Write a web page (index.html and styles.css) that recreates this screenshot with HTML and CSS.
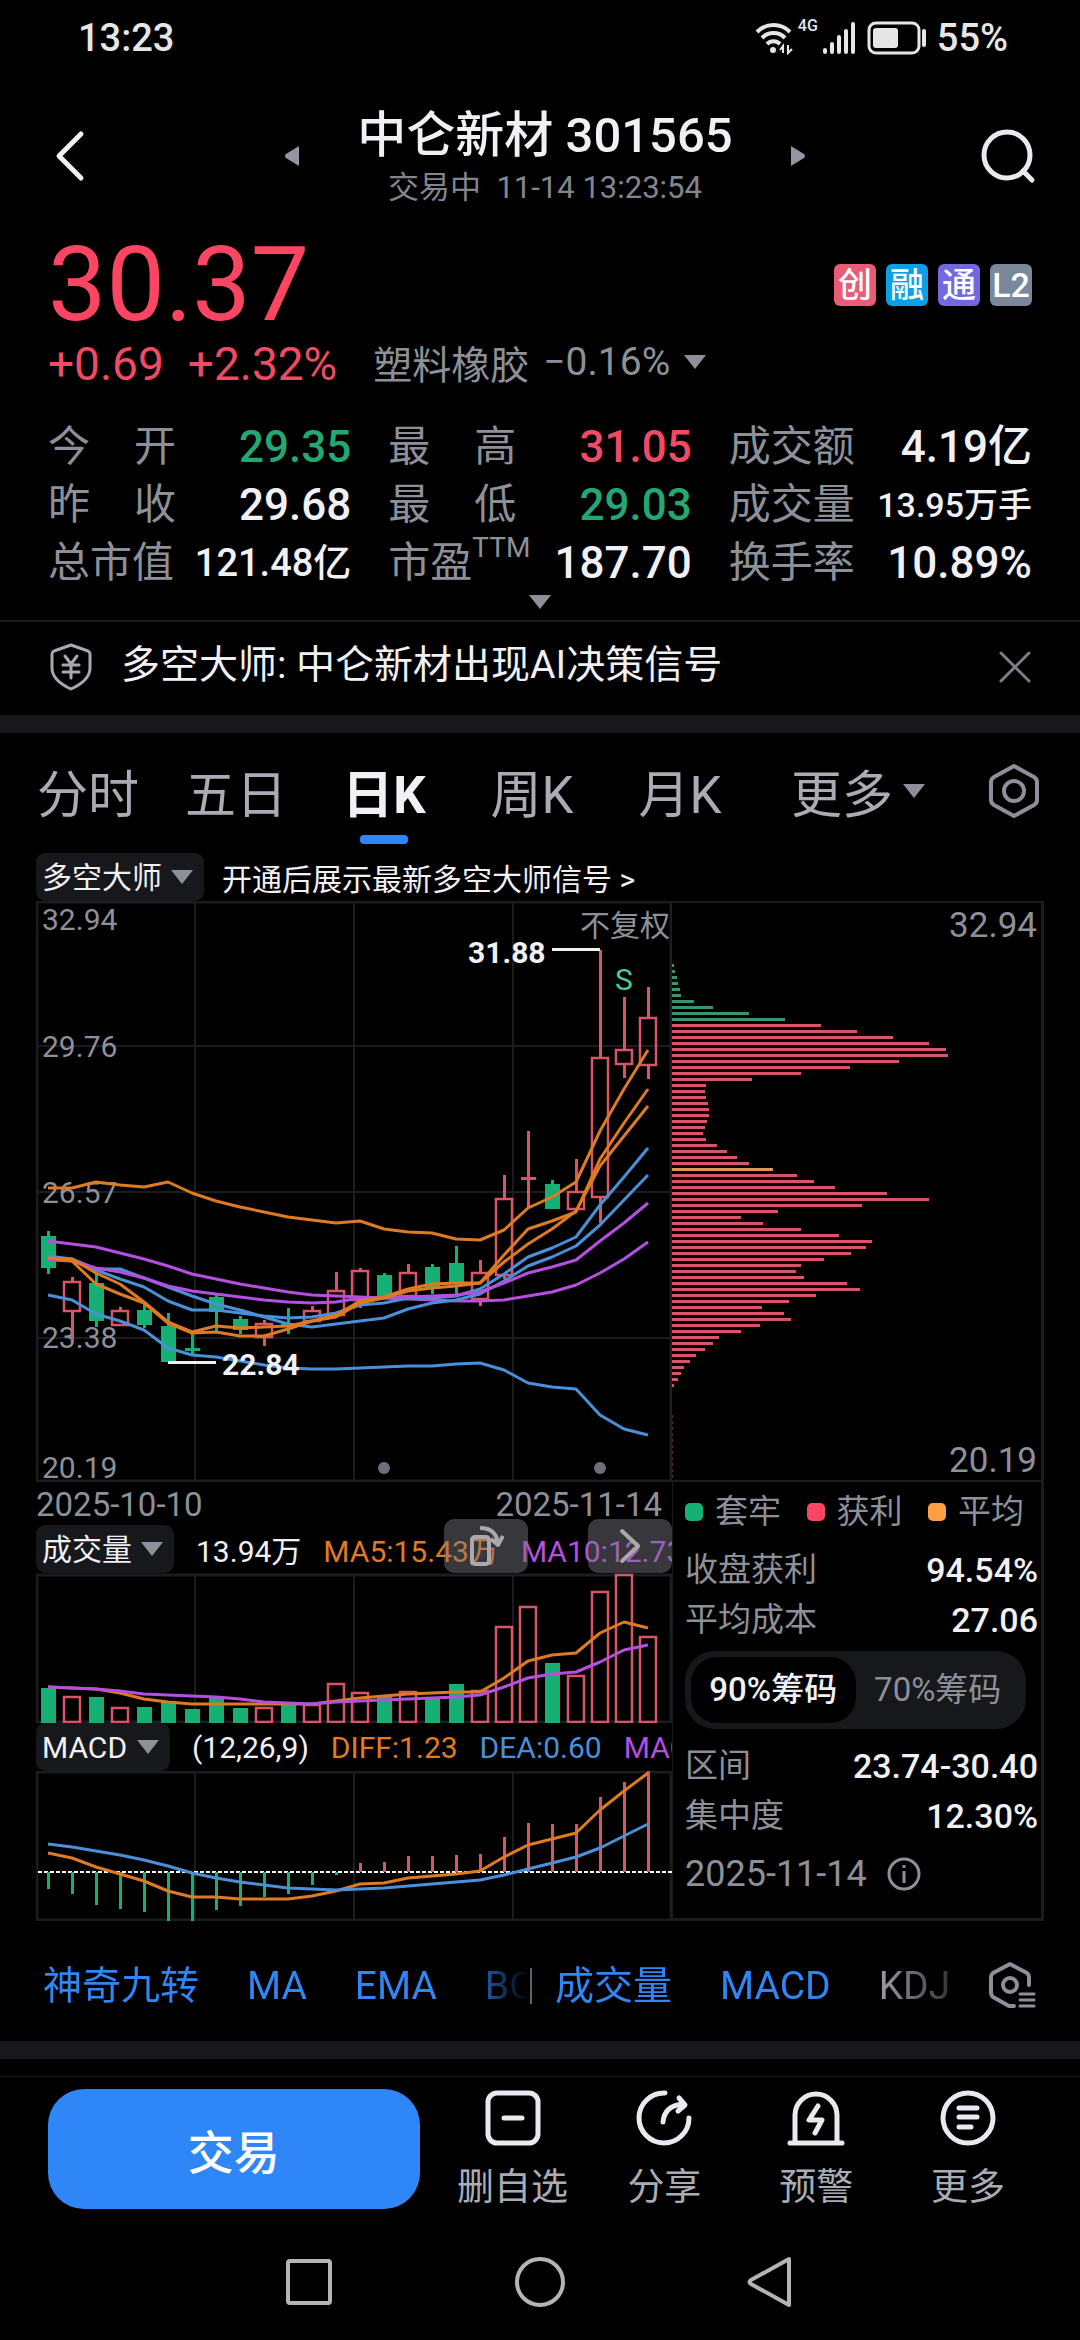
FILE: index.html
```html
<!DOCTYPE html>
<html lang="zh-CN">
<head>
    <meta charset="UTF-8">
    <meta name="viewport" content="width=device-width, initial-scale=1.0">
    <title>中仑新材 301565</title>
    <link rel="stylesheet" href="styles.css">
</head>
<body>

<div class="status-bar">
    <span class="clock">13:23</span>
    <div class="status-icons">
        <svg width="38" height="34" viewBox="0 0 38 34" fill="none" stroke="#e6e6e6" stroke-width="4">
            <path d="M2 11a23 23 0 0 1 33 0M7 17a16 16 0 0 1 23 0M12 23a9 9 0 0 1 13 0"/>
            <circle cx="18" cy="29" r="3" fill="#e6e6e6" stroke="none"/>
            <path d="M28 32v-7l-3 4M33 24v8l4-4" stroke-width="2"/>
        </svg>
        <span class="net">4G</span>
        <svg width="34" height="32" viewBox="0 0 34 32" stroke="#e6e6e6" stroke-width="4" stroke-linecap="round">
            <path d="M2 28v2M9 22v8M16 15v15M23 9v21M30 2v28"/>
        </svg>
        <svg class="battery" width="60" height="34" viewBox="0 0 60 34">
            <rect x="2" y="2" width="50" height="30" rx="7" fill="none" stroke="#e6e6e6" stroke-width="3"/>
            <rect x="6" y="7" width="25" height="20" rx="3" fill="#e6e6e6"/>
            <path d="M57 10v14" stroke="#e6e6e6" stroke-width="4" stroke-linecap="round"/>
        </svg>
        <span>55%</span>
    </div>
</div>

<header class="header">
    <button class="icon-btn" aria-label="返回">
        <svg width="32" height="52" viewBox="0 0 32 52" fill="none" stroke="#f0f0f5" stroke-width="5" stroke-linecap="round" stroke-linejoin="round"><path d="M27 4L5 26l22 22"/></svg>
    </button>
    <button class="icon-btn" aria-label="上一只">
        <svg width="14" height="22" viewBox="0 0 14 22" fill="#9497a1"><path d="M14 1v20L1 13q-2-2 0-4z"/></svg>
    </button>
    <div class="title">
        <h1>中仑新材 301565</h1>
        <p>交易中&nbsp; 11-14 13:23:54</p>
    </div>
    <button class="icon-btn" aria-label="下一只">
        <svg width="14" height="22" viewBox="0 0 14 22" fill="#9497a1"><path d="M0 1v20l13-8q2-2 0-4z"/></svg>
    </button>
    <button class="icon-btn search" aria-label="搜索">
        <svg width="56" height="56" viewBox="0 0 56 56" fill="none" stroke="#e9e9f0" stroke-width="5" stroke-linecap="round"><circle cx="27" cy="27" r="23"/><path d="M43 43l9 9"/></svg>
    </button>
</header>

<section class="quote">
    <div class="price-row">
        <span class="price">30.37</span>
        <div class="tags">
            <span class="tag tag-red">创</span>
            <span class="tag tag-blue">融</span>
            <span class="tag tag-purple">通</span>
            <span class="tag tag-gray">L2</span>
        </div>
    </div>
    <div class="change-row">
        <span class="up">+0.69</span>
        <span class="up">+2.32%</span>
        <button class="sector">塑料橡胶 <span>−0.16%</span><i class="arrow"></i></button>
    </div>
    <dl class="stats">
        <div><dt><span>今</span><span>开</span></dt><dd class="green">29.35</dd></div>
        <div><dt><span>最</span><span>高</span></dt><dd class="red">31.05</dd></div>
        <div><dt>成交额</dt><dd>4.19亿</dd></div>
        <div><dt><span>昨</span><span>收</span></dt><dd>29.68</dd></div>
        <div><dt><span>最</span><span>低</span></dt><dd class="green">29.03</dd></div>
        <div><dt>成交量</dt><dd class="small">13.95万手</dd></div>
        <div><dt>总市值</dt><dd class="medium">121.48亿</dd></div>
        <div><dt>市盈<sup>TTM</sup></dt><dd>187.70</dd></div>
        <div><dt>换手率</dt><dd>10.89%</dd></div>
    </dl>
    <button class="expand" aria-label="展开"><i class="arrow"></i></button>
</section>

<div class="alert">
    <svg width="44" height="48" viewBox="0 0 44 48" fill="none" stroke="#a6a9b1" stroke-width="3" stroke-linejoin="round" stroke-linecap="round">
        <path d="M22 2l17 6q2 1 2 3v14c0 9-8 16-19 21C11 41 3 34 3 25V11q0-2 2-3z"/>
        <path d="M16 13l6 8 6-8M22 21v14M14 22h16M14 29h16"/>
    </svg>
    <a href="#">多空大师: 中仑新材出现AI决策信号</a>
    <button class="icon-btn" aria-label="关闭">
        <svg width="32" height="32" viewBox="0 0 32 32" stroke="#7b7e88" stroke-width="3" stroke-linecap="round"><path d="M2 2l28 28M30 2L2 30"/></svg>
    </button>
</div>

<div class="band"></div>

<nav class="periods">
    <button>分时</button>
    <button>五日</button>
    <button class="active">日K</button>
    <button>周K</button>
    <button>月K</button>
    <button>更多<i class="arrow"></i></button>
    <button aria-label="设置">
        <svg width="54" height="56" viewBox="0 0 54 56" fill="none" stroke="#8d9098" stroke-width="4" stroke-linejoin="round"><path d="M27 3l20 11q3 2 3 5v18q0 3-3 5L27 53 7 42q-3-2-3-5V19q0-3 3-5z"/><circle cx="27" cy="28" r="10"/></svg>
    </button>
</nav>

<main class="charts">
    <div class="toolbar master">
        <label class="pick"><select aria-label="主图指标"><option>多空大师</option></select></label>
        <a href="#">开通后展示最新多空大师信号 &gt;</a>
    </div>

    <div class="left">
        <svg id="kline" class="chart" viewBox="36 901 636 581" role="img" aria-label="日K线"></svg>
        <div class="dates"><span>2025-10-10</span><span>2025-11-14</span></div>

        <div class="toolbar">
            <label class="pick"><select aria-label="副图指标一"><option>成交量</option></select></label>
            <span>13.94万</span>
            <span class="orange">MA5:15.43万</span>
            <span class="purple">MA10:12.73万</span>
            <div class="floating">
                <button aria-label="横屏">
                    <svg width="36" height="42" viewBox="0 0 36 42" fill="none" stroke="#a9a9ad" stroke-width="4" stroke-linejoin="round"><rect x="4" y="12" width="17" height="27" rx="3"/><path d="M12 3c11 0 17 6 18 16M23 14l7 6 5-9"/></svg>
                </button>
                <button aria-label="下一页">
                    <svg width="22" height="36" viewBox="0 0 22 36" fill="none" stroke="#a9a9ad" stroke-width="4" stroke-linecap="round" stroke-linejoin="round"><path d="M3 3l16 15L3 33"/></svg>
                </button>
            </div>
        </div>
        <svg id="volume" class="chart" viewBox="36 1573 636 150" role="img" aria-label="成交量"></svg>

        <div class="toolbar">
            <label class="pick"><select aria-label="副图指标二"><option>MACD</option></select></label>
            <span>(12,26,9)</span>
            <span class="orange">DIFF:1.23</span>
            <span class="blue">DEA:0.60</span>
            <span class="purple">MACD:1.26</span>
        </div>
        <svg id="macd" class="chart" viewBox="36 1771 636 150" role="img" aria-label="MACD"></svg>
    </div>

    <aside class="right">
        <svg id="chips" class="chart" viewBox="672 901 372 581" role="img" aria-label="筹码分布"></svg>
        <div class="chip-info">
            <div class="legend">
                <span class="key key-green">套牢</span>
                <span class="key key-red">获利</span>
                <span class="key key-orange">平均</span>
            </div>
            <div class="line"><span>收盘获利</span><b>94.54%</b></div>
            <div class="line"><span>平均成本</span><b>27.06</b></div>
            <div class="toggle">
                <label><input type="radio" name="chip" checked><span>90%筹码</span></label>
                <label><input type="radio" name="chip"><span>70%筹码</span></label>
            </div>
            <div class="line"><span>区间</span><b>23.74-30.40</b></div>
            <div class="line"><span>集中度</span><b>12.30%</b></div>
            <div class="chip-date">
                2025-11-14
                <button class="icon-btn" aria-label="说明">
                    <svg width="34" height="34" viewBox="0 0 34 34" fill="none" stroke="#8d9098" stroke-width="3"><circle cx="17" cy="17" r="15"/><path d="M17 14v12M17 8v3"/></svg>
                </button>
            </div>
        </div>
    </aside>
</main>

<nav class="indicators">
    <div class="group group-main">
        <button>神奇九转</button>
        <button>MA</button>
        <button>EMA</button>
        <button>BOLL</button>
    </div>
    <div class="group group-sub">
        <button>成交量</button>
        <button>MACD</button>
        <button class="off">KDJ</button>
    </div>
    <button class="icon-btn" aria-label="指标设置">
        <svg width="50" height="50" viewBox="0 0 50 50" fill="none" stroke="#8d9098" stroke-width="4" stroke-linecap="round" stroke-linejoin="round"><path d="M42 24V16q0-2-2-4L23 3 6 12q-2 2-2 4v16q0 2 2 4l16 9h5"/><circle cx="23" cy="24" r="7"/><path d="M33 33h14M33 39h14M33 45h14" stroke-width="3"/></svg>
    </button>
</nav>

<div class="band"></div>

<footer class="actions">
    <button class="trade">交易</button>
    <button class="action">
        <svg width="58" height="58" viewBox="0 0 58 58" fill="none" stroke="#e9e9f0" stroke-width="5" stroke-linecap="round"><rect x="4" y="4" width="50" height="50" rx="9"/><path d="M20 29h18"/></svg>
        删自选
    </button>
    <button class="action">
        <svg width="58" height="58" viewBox="0 0 58 58" fill="none" stroke="#e9e9f0" stroke-width="5" stroke-linecap="round" stroke-linejoin="round"><path d="M30 4a25 25 0 1 0 24 25M28 33c1-11 8-17 20-18M44 9l6 7-7 6"/></svg>
        分享
    </button>
    <button class="action">
        <svg width="58" height="58" viewBox="0 0 58 58" fill="none" stroke="#e9e9f0" stroke-width="5" stroke-linecap="round" stroke-linejoin="round"><path d="M3 54h52M8 54V26a21 21 0 0 1 42 0v28"/><path d="M31 17l-9 14h13l-7 13" stroke-width="5"/></svg>
        预警
    </button>
    <button class="action">
        <svg width="58" height="58" viewBox="0 0 58 58" fill="none" stroke="#e9e9f0" stroke-width="5" stroke-linecap="round"><circle cx="29" cy="29" r="25"/><path d="M20 19h18M20 28h18M20 38h12"/></svg>
        更多
    </button>
</footer>

<div class="system-nav">
    <button class="icon-btn" aria-label="最近任务"><svg width="52" height="52" viewBox="0 0 52 52" fill="none" stroke="#b4b4b4" stroke-width="4"><rect x="5" y="5" width="42" height="42" rx="2"/></svg></button>
    <button class="icon-btn" aria-label="主屏幕"><svg width="52" height="52" viewBox="0 0 52 52" fill="none" stroke="#b4b4b4" stroke-width="4"><circle cx="26" cy="26" r="23"/></svg></button>
    <button class="icon-btn" aria-label="返回"><svg width="52" height="52" viewBox="0 0 52 52" fill="none" stroke="#b4b4b4" stroke-width="4" stroke-linejoin="round"><path d="M44 3v46L6 28q-3-2 0-4z"/></svg></button>
</div>

<script src="charts.js"></script>
</body>
</html>
```
FILE: styles.css
```css
* {
    box-sizing: border-box;
}

body {
    margin: 0;
    background-color: #000;
    color: #f0f0f5;
    font-family: Roboto, "Noto Sans CJK SC", sans-serif;
    font-size: 30px;
}

h1, p, dl, dd {
    margin: 0;
}

button, select {
    margin: 0;
    padding: 0;
    border: 0;
    background: none;
    color: inherit;
    font: inherit;
}

a {
    color: inherit;
    text-decoration: none;
}

svg {
    display: block;
    flex: none;
}

.arrow {
    display: inline-block;
    border: 11px solid transparent;
    border-top: 14px solid #8d9098;
    border-bottom: 0;
}

.band {
    height: 18px;
    background-color: #17181c;
}

/* Phone status bar */
.status-bar {
    display: flex;
    justify-content: space-between;
    align-items: center;
    height: 76px;
    padding: 0 72px 0 78px;
    font-size: 38px;
    font-weight: 500;
    color: #e6e6e6;
}

.status-icons {
    display: flex;
    align-items: center;
    gap: 5px;
}

.net {
    align-self: flex-start;
    font-size: 16px;
    line-height: 20px;
}

.battery {
    margin: 0 5px;
}

/* Header */
.header {
    display: grid;
    grid-template-columns: 1fr auto 492px auto 1fr;
    align-items: center;
    height: 156px;
    padding: 4px 44px 0 54px;
}

.header .search {
    justify-self: end;
}

.title {
    padding-top: 4px;
    text-align: center;
}

.title h1 {
    font-size: 49px;
    font-weight: 500;
    line-height: 60px;
}

.title p {
    font-size: 31px;
    line-height: 44px;
    color: #82858f;
}

/* Quote */
.quote {
    padding: 0 48px;
    border-bottom: 2px solid #1b1c20;
}

.price-row {
    display: flex;
    justify-content: space-between;
    align-items: center;
}

.price {
    font-size: 104px;
    line-height: 106px;
    color: #fc4562;
}

.tags {
    display: flex;
    gap: 10px;
}

.tag {
    width: 42px;
    border-radius: 6px;
    font-size: 34px;
    font-weight: 500;
    line-height: 42px;
    text-align: center;
    color: #fff;
}

.tag-red { background-color: #e85d75; }
.tag-blue { background-color: #0a9fe6; }
.tag-purple { background-color: #7468e0; }
.tag-gray { background-color: #7a8899; }

.change-row {
    display: flex;
    align-items: center;
    gap: 24px;
    height: 52px;
}

.up {
    font-size: 46px;
    line-height: 52px;
    color: #f04a64;
}

.sector {
    display: flex;
    align-items: center;
    gap: 14px;
    margin-left: 12px;
    padding-bottom: 4px;
    font-size: 39px;
    color: #8d9098;
}

.stats {
    display: grid;
    grid-template-columns: repeat(3, 1fr);
    column-gap: 37px;
    padding-top: 28px;
}

.stats div {
    display: flex;
    justify-content: space-between;
    align-items: center;
    line-height: 58px;
    white-space: nowrap;
}

.stats dt {
    display: flex;
    justify-content: space-between;
    width: 128px;
    font-size: 42px;
    color: #8d9098;
}

.stats sup {
    font-size: 28px;
    line-height: 28px;
}

.stats dd {
    font-size: 44px;
    font-weight: 500;
}

.stats .medium { font-size: 38px; }
.stats .small { font-size: 34px; }

.green { color: #24a873; }
.red { color: #f04a64; }
.orange { color: #e07b20; }
.blue { color: #4a90d9; }
.purple { color: #b44fe0; }

.expand {
    display: flex;
    justify-content: center;
    width: 100%;
    height: 28px;
    padding-top: 3px;
}

.alert {
    display: flex;
    align-items: center;
    gap: 28px;
    height: 93px;
    padding: 0 49px 3px;
    font-size: 39px;
    line-height: 50px;
}

.alert a {
    flex: 1;
    padding-bottom: 4px;
}

/* Period tabs */
.periods {
    display: grid;
    grid-template-columns: 148fr 148fr 148fr 148fr 148fr 208fr 104fr;
    height: 120px;
    padding: 0 14px;
    font-size: 51px;
    color: #a9acb5;
}

.periods button {
    display: flex;
    position: relative;
    justify-content: center;
    align-items: center;
    gap: 10px;
    padding-bottom: 4px;
    white-space: nowrap;
}

.periods .active {
    font-weight: 700;
    color: #f0f0f5;
}

.periods .active::after {
    content: "";
    position: absolute;
    bottom: 9px;
    width: 48px;
    height: 9px;
    border-radius: 4px;
    background-color: #2f86f6;
}

/* Charts */
.charts {
    display: grid;
    grid-template-columns: 636fr 372fr;
    padding: 0 36px;
}

.master {
    grid-column: 1 / 3;
}

.left, .right {
    min-width: 0;
}

.right {
    display: flex;
    flex-direction: column;
}

.chart {
    width: 100%;
    height: auto;
    font-size: 30px;
}

.toolbar {
    display: flex;
    position: relative;
    align-items: center;
    gap: 22px;
    height: 48px;
    overflow: hidden;
    white-space: nowrap;
}

.master {
    gap: 18px;
}

.toolbar .floating {
    position: absolute;
    right: 0;
    bottom: 0;
    display: flex;
    gap: 60px;
}

.left .toolbar:has(.floating) {
    overflow-x: clip;
    overflow-y: visible;
}

.floating button {
    display: flex;
    justify-content: center;
    align-items: center;
    width: 84px;
    height: 54px;
    border-radius: 10px;
    background-color: rgba(125, 125, 132, 0.45);
}

.pick {
    display: flex;
    align-items: center;
    gap: 9px;
    height: 48px;
    padding: 0 11px 0 6px;
    border-radius: 9px;
    background-color: #17181c;
}

.pick select {
    appearance: none;
}

.pick::after {
    content: "";
    border: 11px solid transparent;
    border-top: 14px solid #8d9098;
    border-bottom: 0;
}

.dates {
    display: flex;
    justify-content: space-between;
    padding: 3px 10px 0 0;
    font-size: 33px;
    line-height: 40px;
    color: #8d9098;
}

.chip-info {
    flex: 1;
    border: solid #1b1c20;
    border-width: 0 3px 3px 1px;
    padding: 5px 3px 0 12px;
    font-size: 33px;
    color: #8d9098;
}

.legend {
    display: flex;
    justify-content: space-between;
    padding-right: 14px;
    line-height: 50px;
}

.key {
    display: flex;
    align-items: center;
    gap: 12px;
}

.key::before {
    content: "";
    width: 18px;
    height: 18px;
    border-radius: 5px;
}

.key-green::before { background-color: #16b074; }
.key-red::before { background-color: #fc4562; }
.key-orange::before { background-color: #ff9f43; }

.line {
    display: flex;
    justify-content: space-between;
    line-height: 50px;
}

.legend + .line {
    margin-top: 8px;
}

.line b {
    font-size: 34px;
    font-weight: 500;
    color: #f0f0f5;
}

.toggle {
    display: grid;
    grid-template-columns: 1fr 1fr;
    margin: 6px 12px 12px 0;
    padding: 6px;
    border-radius: 30px;
    background-color: #17181c;
}

.toggle input {
    position: absolute;
    opacity: 0;
}

.toggle span {
    display: block;
    border-radius: 26px;
    line-height: 66px;
    text-align: center;
    white-space: nowrap;
}

.toggle input:checked + span {
    background-color: #000;
    font-weight: 500;
    color: #f0f0f5;
}

.chip-date {
    display: flex;
    align-items: center;
    gap: 20px;
    font-size: 36px;
    line-height: 66px;
}

/* Indicator tabs */
.indicators {
    display: grid;
    grid-template-columns: 487fr 457fr 50px;
    align-items: center;
    height: 120px;
    padding: 10px 43px 0;
    font-size: 39px;
    color: #2f86f6;
}

.group {
    display: flex;
    gap: 48px;
    min-width: 0;
    overflow: hidden;
    white-space: nowrap;
}

.group button {
    line-height: 50px;
}

.group-main {
    mask-image: linear-gradient(to right, #000 86%, transparent);
}

.group-sub {
    margin-right: 34px;
    padding-left: 25px;
    background: linear-gradient(#63656d, #63656d) left center / 2px 36px no-repeat;
    mask-image: linear-gradient(to right, #000 82%, rgba(0, 0, 0, 0.3));
}

.off {
    color: #9da0a8;
}

/* Bottom actions */
.actions {
    display: grid;
    grid-template-columns: 389fr 152fr 152fr 152fr 152fr;
    margin-top: 17px;
    padding: 12px 36px 0 48px;
    border-top: 1px solid #1b1c20;
}

.trade {
    height: 120px;
    margin-right: 17px;
    border-radius: 36px;
    background-color: #2f86f6;
    font-size: 46px;
    font-weight: 500;
    color: #fff;
}

.action {
    display: flex;
    flex-direction: column;
    align-items: center;
    gap: 17px;
    font-size: 37px;
    line-height: 48px;
    color: #a9acb5;
}

.system-nav {
    display: flex;
    justify-content: center;
    gap: 179px;
    padding: 44px 0 32px;
}
```
FILE: charts.js
```js
const RED = '#d95467';
const GREEN = '#16b074';
const ORANGE = '#dd7a22';
const BLUE = '#4a90d9';
const PURPLE = '#b44fe0';
const GRID = '#1b1c20';
const GRAY = '#8d9098';

const FIRST_X = 48;
const STEP = 24;

// direction, high, body top, body bottom, low
const candles = [
    ['g', 1231, 1236, 1268, 1274], ['r', 1277, 1281, 1312, 1341], ['g', 1274, 1283, 1321, 1327],
    ['r', 1307, 1310, 1326, 1326], ['g', 1304, 1310, 1325, 1328], ['g', 1313, 1326, 1362, 1362],
    ['g', 1333, 1348, 1351, 1354], ['g', 1294, 1297, 1312, 1332], ['g', 1316, 1319, 1330, 1334],
    ['r', 1320, 1323, 1338, 1346], ['g', 1308, 1324, 1327, 1334], ['r', 1306, 1310, 1322, 1322],
    ['r', 1272, 1290, 1316, 1316], ['r', 1268, 1270, 1301, 1308], ['g', 1273, 1275, 1297, 1297],
    ['r', 1264, 1272, 1297, 1297], ['g', 1264, 1267, 1288, 1294], ['g', 1246, 1263, 1284, 1294],
    ['r', 1260, 1272, 1300, 1306], ['r', 1175, 1198, 1276, 1279], ['r', 1131, 1177, 1180, 1208],
    ['g', 1180, 1184, 1209, 1209], ['r', 1159, 1191, 1210, 1210], ['r', 950, 1057, 1198, 1223],
    ['r', 997, 1049, 1065, 1078], ['r', 987, 1017, 1066, 1079]
];

const klineLines = [
    [PURPLE, [1241, 1244, 1247, 1253, 1259, 1266, 1274, 1279, 1284, 1288, 1292, 1295, 1296, 1297, 1298, 1299, 1300, 1301, 1301, 1300, 1296, 1292, 1285, 1273, 1259, 1242]],
    [BLUE, [1256, 1259, 1269, 1269, 1278, 1287, 1296, 1304, 1310, 1317, 1324, 1327, 1324, 1321, 1318, 1309, 1303, 1300, 1294, 1281, 1266, 1257, 1246, 1225, 1200, 1175]],
    [BLUE, [1257, 1260, 1270, 1279, 1287, 1301, 1310, 1310, 1313, 1316, 1318, 1317, 1313, 1305, 1303, 1298, 1298, 1296, 1289, 1274, 1257, 1248, 1237, 1205, 1177, 1148]],
    [PURPLE, [1260, 1261, 1268, 1272, 1278, 1286, 1291, 1294, 1297, 1300, 1302, 1303, 1302, 1298, 1298, 1297, 1296, 1295, 1292, 1283, 1273, 1267, 1260, 1241, 1223, 1203]],
    [ORANGE, [1258, 1261, 1284, 1294, 1303, 1323, 1333, 1332, 1336, 1336, 1329, 1321, 1317, 1303, 1298, 1291, 1288, 1286, 1283, 1262, 1244, 1229, 1211, 1166, 1136, 1106]],
    [ORANGE, [1258, 1259, 1273, 1284, 1302, 1322, 1332, 1326, 1328, 1327, 1326, 1321, 1315, 1301, 1297, 1289, 1284, 1283, 1283, 1255, 1229, 1221, 1212, 1159, 1123, 1089]],
    [ORANGE, [1188, 1188, 1182, 1185, 1187, 1182, 1193, 1201, 1207, 1212, 1217, 1220, 1223, 1221, 1229, 1232, 1233, 1239, 1240, 1230, 1208, 1197, 1182, 1131, 1089, 1050]],
    [BLUE, [1295, 1300, 1314, 1321, 1330, 1348, 1355, 1357, 1361, 1365, 1368, 1369, 1369, 1368, 1367, 1366, 1366, 1364, 1363, 1370, 1383, 1387, 1389, 1415, 1429, 1435]]
];

const volumeTops = [1688, 1696, 1697, 1707, 1707, 1701, 1709, 1697, 1708, 1707, 1705, 1704, 1683, 1692, 1697, 1691, 1698, 1684, 1690, 1626, 1606, 1663, 1675, 1591, 1574, 1636];
const volumeLines = [
    [ORANGE, [1687, 1688, 1689, 1693, 1699, 1702, 1704, 1704, 1704, 1704, 1704, 1704, 1701, 1698, 1696, 1694, 1693, 1692, 1692, 1678, 1661, 1655, 1653, 1633, 1622, 1628]],
    [PURPLE, [1687, 1688, 1689, 1691, 1694, 1695, 1696, 1697, 1699, 1702, 1703, 1704, 1702, 1701, 1700, 1699, 1698, 1697, 1695, 1687, 1678, 1674, 1672, 1662, 1650, 1645]]
];

const macdZero = 1872;
const macdBars = [1889, 1894, 1905, 1909, 1912, 1921, 1921, 1910, 1906, 1897, 1894, 1885, 1875, 1863, 1862, 1856, 1856, 1855, 1854, 1837, 1823, 1824, 1824, 1797, 1782, 1771];
const macdLines = [
    [ORANGE, [1853, 1858, 1867, 1874, 1881, 1891, 1897, 1897, 1899, 1899, 1899, 1896, 1891, 1884, 1883, 1878, 1876, 1874, 1871, 1857, 1845, 1839, 1833, 1810, 1791, 1773]],
    [BLUE, [1844, 1847, 1851, 1855, 1860, 1866, 1873, 1878, 1882, 1885, 1888, 1889, 1890, 1889, 1888, 1886, 1884, 1882, 1880, 1875, 1869, 1863, 1857, 1848, 1836, 1824]]
];

const chipWidths = [
    2, 3, 5, 6, 8, 9, 22, 41, 77, 113, 149, 185, 221, 257, 274, 276, 227, 178, 129, 80, 34, 33, 34, 36, 37, 37,
    35, 33, 31, 34, 45, 55, 65, 77, 101, 125, 142, 163, 215, 257, 190, 106, 69, 91, 129, 167, 200, 194, 179, 152,
    129, 124, 132, 175, 188, 144, 117, 90, 112, 119, 88, 69, 47, 41, 33, 24, 18, 12, 9, 6, 2
];

function rect(x, y, w, h, fill) {
    return `<rect x="${x}" y="${y}" width="${w}" height="${h}" fill="${fill}"/>`;
}

function hollow(x, y, w, h) {
    return `<rect x="${x + 1}" y="${y + 1}" width="${w - 2}" height="${Math.max(h - 2, 1)}" fill="none" stroke="${RED}" stroke-width="2.5"/>`;
}

function text(x, y, value, fill, extra = '') {
    return `<text x="${x}" y="${y}" fill="${fill}" ${extra}>${value}</text>`;
}

function polyline([color, ys]) {
    const points = ys.map((y, i) => `${FIRST_X + i * STEP},${y}`).join(' ');
    return `<polyline points="${points}" fill="none" stroke="${color}" stroke-width="3" stroke-linejoin="round"/>`;
}

// Frame plus the three vertical date lines
function grid(top, bottom) {
    let out = `<rect x="37" y="${top + 1}" width="634" height="${bottom - top - 2}" fill="none" stroke="${GRID}" stroke-width="3"/>`;
    [194, 353, 512].forEach(x => out += rect(x, top, 2, bottom - top, GRID));
    return out;
}

function drawKline() {
    let out = grid(901, 1482);
    [1045, 1191, 1337].forEach(y => out += rect(36, y, 636, 2, GRID));
    [[930, '32.94'], [1057, '29.76'], [1203, '26.57'], [1348, '23.38'], [1478, '20.19']]
        .forEach(([y, v]) => out += text(42, y, v, GRAY));
    out += text(580, 936, '不复权', GRAY);

    candles.forEach(([dir, high, top, bottom, low], i) => {
        const x = FIRST_X + i * STEP;
        const color = dir === 'g' ? GREEN : RED;
        out += rect(x - 1, high, 3, top - high, color);
        out += rect(x - 1, bottom, 3, low - bottom, color);
        if (dir === 'g' || bottom - top < 4) {
            out += rect(x - 7, top, 15, bottom - top, color);
        } else {
            out += hollow(x - 9, top, 18, bottom - top);
        }
    });
    klineLines.forEach(line => out += polyline(line));

    out += rect(552, 948, 48, 3, '#f0f0f5') + text(468, 963, '31.88', '#f0f0f5', 'font-weight="700"');
    out += rect(168, 1361, 48, 3, '#f0f0f5') + text(222, 1375, '22.84', '#f0f0f5', 'font-weight="700"');
    out += text(615, 990, 'S', '#4fc99a');
    out += '<circle cx="384" cy="1468" r="6" fill="#6c6e79"/><circle cx="600" cy="1468" r="6" fill="#6c6e79"/>';
    document.getElementById('kline').innerHTML = out;
}

function drawVolume() {
    let out = grid(1574, 1723);
    volumeTops.forEach((y, i) => {
        const x = FIRST_X + i * STEP;
        out += candles[i][0] === 'g' ? rect(x - 7, y, 15, 1723 - y, GREEN) : hollow(x - 9, y, 18, 1723 - y);
    });
    volumeLines.forEach(line => out += polyline(line));
    document.getElementById('volume').innerHTML = out;
}

function drawMacd() {
    let out = grid(1771, 1921);
    out += `<path d="M38 ${macdZero}H672" stroke="#fff" stroke-width="2" stroke-dasharray="4 2"/>`;
    macdBars.forEach((y, i) => {
        const x = FIRST_X + i * STEP - 1;
        out += y > macdZero ? rect(x, macdZero, 3, y - macdZero, GREEN) : rect(x, y, 3, macdZero - y, RED);
    });
    macdLines.forEach(line => out += polyline(line));
    document.getElementById('macd').innerHTML = out;
}

function drawChips() {
    let out = rect(672, 901, 372, 2, GRID) + rect(1041, 901, 3, 581, GRID) + rect(672, 1480, 372, 3, GRID);
    chipWidths.forEach((w, i) => {
        const color = i < 10 ? '#35966f' : i === 34 ? '#e0975c' : RED;
        out += rect(672, 964 + i * 6, w, 3, color);
    });
    out += `<path d="M672 1415V1480" stroke="#5a2a30" stroke-width="2" stroke-dasharray="3 3"/>`;
    out += text(1037, 937, '32.94', GRAY, 'font-size="35" text-anchor="end"');
    out += text(1037, 1472, '20.19', GRAY, 'font-size="35" text-anchor="end"');
    document.getElementById('chips').innerHTML = out;
}

drawKline();
drawVolume();
drawMacd();
drawChips();
```
